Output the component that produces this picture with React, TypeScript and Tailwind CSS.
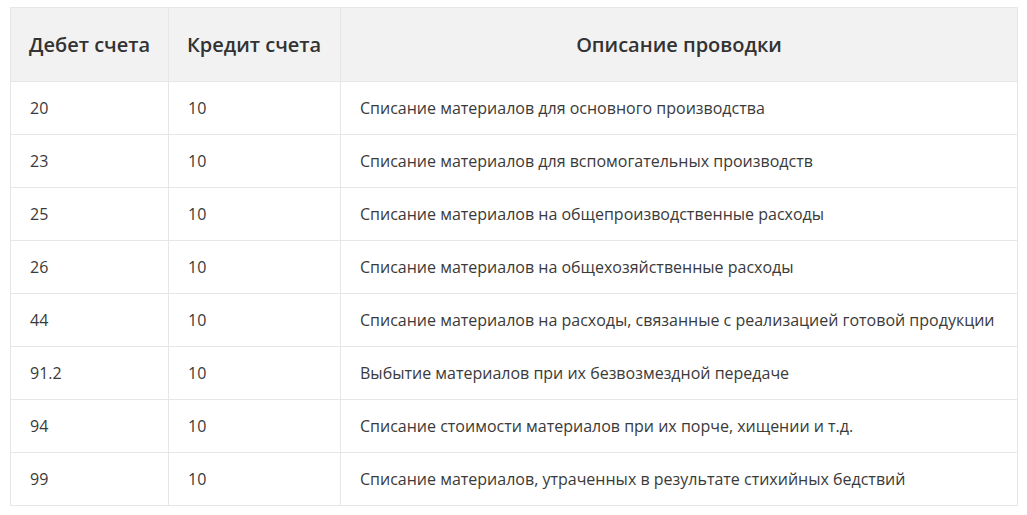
import React from 'react';

const ROWS: [string, string, string][] = [
  ['20', '10', 'Списание материалов для основного производства'],
  ['23', '10', 'Списание материалов для вспомогательных производств'],
  ['25', '10', 'Списание материалов на общепроизводственные расходы'],
  ['26', '10', 'Списание материалов на общехозяйственные расходы'],
  ['44', '10', 'Списание материалов на расходы, связанные с реализацией готовой продукции'],
  ['91.2', '10', 'Выбытие материалов при их безвозмездной передаче'],
  ['94', '10', 'Списание стоимости материалов при их порче, хищении и т.д.'],
  ['99', '10', 'Списание материалов, утраченных в результате стихийных бедствий'],
];

const App = () => {
  return (
    <div className="w-[1027px] h-[515px] bg-white pt-[7px] pl-[10px] font-['Open_Sans',sans-serif] text-[#3a3a3a]">
      <table className="w-[1008px] border-collapse table-fixed">
        <colgroup>
          <col className="w-[158px]" />
          <col className="w-[172px]" />
          <col />
        </colgroup>
        <thead>
          <tr className="bg-[#f2f2f2] h-[74px] text-[#333]">
            <th className="border border-[#e6e6e6] pl-[18px] text-left text-[20px] font-semibold">Дебет счета</th>
            <th className="border border-[#e6e6e6] pl-[18px] text-left text-[20px] font-semibold">Кредит счета</th>
            <th className="border border-[#e6e6e6] text-center text-[20px] font-semibold">Описание проводки</th>
          </tr>
        </thead>
        <tbody>
          {ROWS.map(([d, k, desc]) => (
            <tr key={d} className="h-[53px] text-[16px]">
              <td className="border border-[#e6e6e6] pl-[19px]">{d}</td>
              <td className="border border-[#e6e6e6] pl-[19px]">{k}</td>
              <td className="border border-[#e6e6e6] pl-[19px]">{desc}</td>
            </tr>
          ))}
        </tbody>
      </table>
    </div>
  );
};

export default App;
